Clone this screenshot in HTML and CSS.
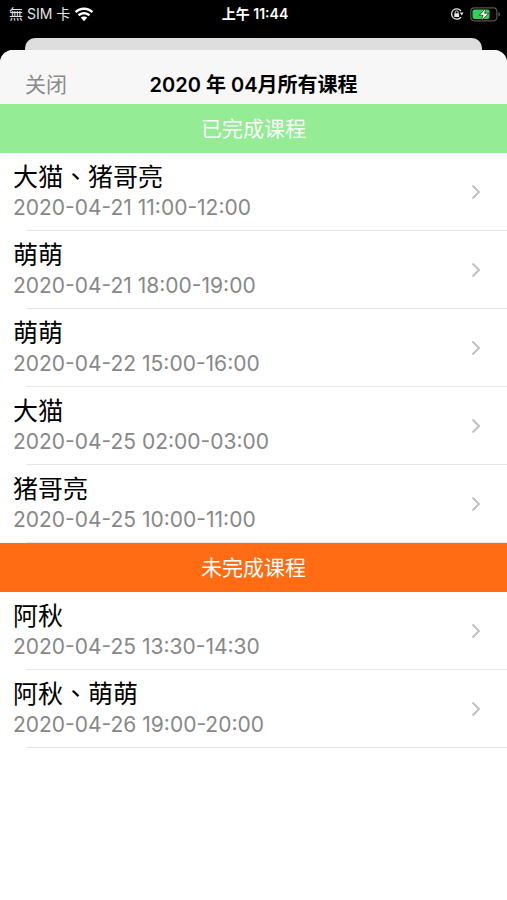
FILE: index.html
```
<!DOCTYPE html>
<html lang="zh-Hans">
  <head>
    <meta charset="utf-8" />
    <meta name="viewport" content="width=device-width, initial-scale=1.0" />
    <title>2020年 04月所有课程</title>
    <link rel="stylesheet" href="styles.css">
  </head>
  <body>
    <div class="status-bar" lang="zh-Hant">
      <div class="status-left">
        <span class="carrier">無 SIM 卡</span>
        <svg class="wifi" width="20" height="15" viewBox="0 0 20 15" fill="#fff">
          <path d="M10 0.5C6.400 0.500 3.100 1.900 0.700 4.200L2.500 6.100C4.400 4.200 7.100 3.100 10 3.100S15.600 4.200 17.500 6.100L19.300 4.200C16.900 1.900 13.600 0.500 10 0.500Z" />
          <path d="M10 5C7.600 5 5.400 5.900 3.700 7.400L5.500 9.300C6.700 8.200 8.300 7.600 10 7.600S13.300 8.200 14.500 9.300L16.300 7.400C14.600 5.900 12.400 5 10 5Z" />
          <path d="M10 9.400C8.800 9.400 7.600 9.900 6.700 10.600L10 14.200L13.300 10.600C12.400 9.900 11.200 9.400 10 9.400Z" />
        </svg>
      </div>
      <div class="clock">上午 11:44</div>
      <div class="status-right">
        <svg width="14" height="14" viewBox="0 0 14 14" fill="none" stroke="#e6e6e6">
          <path d="M11 4A5.200 5.200 0 1 0 11 10" stroke-width="1.300" />
          <path d="M9.800 5.600H13.600L11.700 8.600Z" fill="#e6e6e6" stroke="none" />
          <rect x="4.300" y="6.300" width="4.800" height="3.600" rx="0.500" fill="#e6e6e6" stroke="none" />
          <path d="M5.300 6.500V5.300A1.400 1.400 0 0 1 8.100 5.300V6.500" />
        </svg>
        <svg width="31" height="15" viewBox="0 0 31 15">
          <rect x="0.800" y="0.800" width="26" height="13" rx="3.500" fill="none" stroke="#555" stroke-width="1.200" />
          <path d="M28.500 5V9.600C29.400 9.200 30 8.300 30 7.300S29.400 5.400 28.500 5Z" fill="#666" />
          <rect x="2.500" y="2.500" width="17" height="9.600" rx="2" fill="#32d158" />
          <path d="M15.800 1L9.300 8.200H13L11.300 13.800L18.800 6.300H14.600Z" fill="#fff" stroke="#000" stroke-width="0.600" />
        </svg>
      </div>
    </div>

    <div class="back-sheet"></div>
    <main class="sheet">
      <header class="nav-bar">
        <button class="close" type="button">关闭</button>
        <h1>2020 年 04月所有课程</h1>
      </header>

      <h2 class="section-title done">已完成课程</h2>
      <ul class="lessons">
        <li>
          <a href="#">
            <span class="info"><span class="name" lang="zh-Hant">大猫、猪哥亮</span><span class="time">2020-04-21 11:00-12:00</span></span>
            <svg class="arrow" viewBox="0 0 10 16"><path d="M1.500 1.500L8 8L1.500 14.500" /></svg>
          </a>
        </li>
        <li>
          <a href="#">
            <span class="info"><span class="name" lang="zh-Hant">萌萌</span><span class="time">2020-04-21 18:00-19:00</span></span>
            <svg class="arrow" viewBox="0 0 10 16"><path d="M1.500 1.500L8 8L1.500 14.500" /></svg>
          </a>
        </li>
        <li>
          <a href="#">
            <span class="info"><span class="name" lang="zh-Hant">萌萌</span><span class="time">2020-04-22 15:00-16:00</span></span>
            <svg class="arrow" viewBox="0 0 10 16"><path d="M1.500 1.500L8 8L1.500 14.500" /></svg>
          </a>
        </li>
        <li>
          <a href="#">
            <span class="info"><span class="name" lang="zh-Hant">大猫</span><span class="time">2020-04-25 02:00-03:00</span></span>
            <svg class="arrow" viewBox="0 0 10 16"><path d="M1.500 1.500L8 8L1.500 14.500" /></svg>
          </a>
        </li>
        <li>
          <a href="#">
            <span class="info"><span class="name" lang="zh-Hant">猪哥亮</span><span class="time">2020-04-25 10:00-11:00</span></span>
            <svg class="arrow" viewBox="0 0 10 16"><path d="M1.500 1.500L8 8L1.500 14.500" /></svg>
          </a>
        </li>
      </ul>

      <h2 class="section-title todo">未完成课程</h2>
      <ul class="lessons">
        <li>
          <a href="#">
            <span class="info"><span class="name" lang="zh-Hant">阿秋</span><span class="time">2020-04-25 13:30-14:30</span></span>
            <svg class="arrow" viewBox="0 0 10 16"><path d="M1.500 1.500L8 8L1.500 14.500" /></svg>
          </a>
        </li>
        <li>
          <a href="#">
            <span class="info"><span class="name" lang="zh-Hant">阿秋、萌萌</span><span class="time">2020-04-26 19:00-20:00</span></span>
            <svg class="arrow" viewBox="0 0 10 16"><path d="M1.500 1.500L8 8L1.500 14.500" /></svg>
          </a>
        </li>
      </ul>
    </main>
  </body>
</html>
```
FILE: styles.css
```
* {
  box-sizing: border-box;
}
body {
  display: flex;
  flex-direction: column;
  min-height: 100vh;
  margin: 0;
  background: #000;
  font-family: Inter, "Noto Sans CJK SC", sans-serif;
}
/* Status bar */
.status-bar {
  display: grid;
  grid-template-columns: 1fr auto 1fr;
  align-items: center;
  height: 28px;
  margin-bottom: 10px;
  padding: 0 6px 0 9px;
  color: #fff;
  font-size: 14px;
  line-height: 26px;
  font-family: Inter, "Noto Sans CJK TC", sans-serif;
}
.status-left,
.status-right {
  display: flex;
  align-items: center;
  gap: 6px;
}
.status-left {
  gap: 4px;
}
.status-right {
  justify-content: flex-end;
}
.carrier {
  color: #e6e6e6;
}
.clock {
  font-weight: 600;
}
/* Sheets */
.back-sheet {
  height: 12px;
  margin: 0 25px;
  border-radius: 10px 10px 0 0;
  background: #dedede;
}
.sheet {
  flex: 1;
  overflow: hidden;
  border-radius: 13px 13px 0 0;
  background: #fff;
}
.nav-bar {
  display: grid;
  grid-template-columns: 1fr auto 1fr;
  align-items: center;
  height: 54px;
  padding: 16px 25px 0;
  background: #f7f7f7;
}
.nav-bar h1 {
  margin: 0;
  font-size: 20px;
  font-weight: 600;
  line-height: 30px;
}
.close {
  justify-self: start;
  padding: 0;
  border: none;
  background: transparent;
  color: #8a8a8a;
  font-family: inherit;
  font-size: 21px;
  line-height: 30px;
  cursor: pointer;
}
.section-title {
  margin: 0;
  color: #fff;
  font-size: 21px;
  font-weight: 400;
  line-height: 49px;
  text-align: center;
}
.done {
  background: #94ec94;
}
.todo {
  background: #ff6c13;
}
/* Lessons */
.lessons {
  margin: 0;
  padding: 0;
  list-style: none;
}
.lessons a {
  display: flex;
  align-items: center;
  justify-content: space-between;
  height: 78px;
  padding: 0 26px 0 13px;
  background: linear-gradient(#e6e6e6, #e6e6e6) 26px 100% / 100% 1px no-repeat;
  color: #000;
  text-decoration: none;
}
.name,
.time {
  display: block;
}
.name {
  font-family: "Noto Sans CJK TC", sans-serif;
  font-size: 25px;
  line-height: 32px;
}
.time {
  color: #888;
  font-size: 21px;
  line-height: 34px;
}
.arrow {
  width: 10px;
  height: 16px;
  fill: none;
  stroke: #c0c0c3;
  stroke-width: 2;
}
```
